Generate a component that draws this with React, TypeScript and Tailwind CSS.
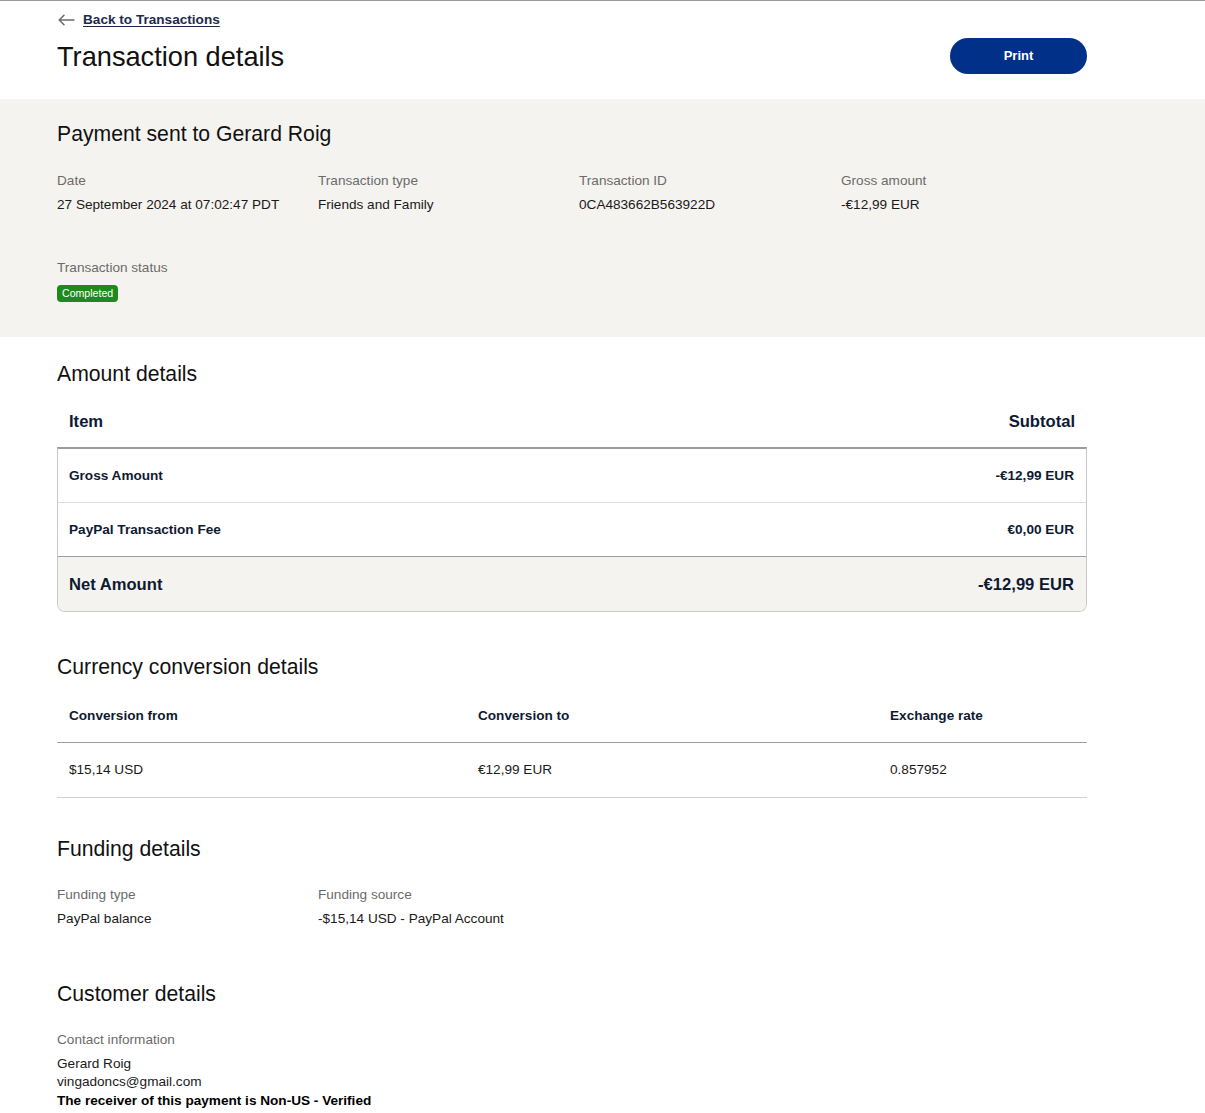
import React from "react";

const font = { fontFamily: '"Liberation Sans", Arial, sans-serif' };

function Field({ label, value }: { label: string; value: string }) {
  return (
    <div>
      <div className="text-[13.6px] leading-[20px] text-[#6b6b6b]">{label}</div>
      <div className="mt-[4px] text-[13.6px] leading-[20px] text-[#1a1a1a]">{value}</div>
    </div>
  );
}

export default function App() {
  return (
    <div style={font} className="min-h-[1113px] bg-white border-t border-[#9a9a9a] text-[#1a1a1a]">
      {/* Header */}
      <div className="px-[57px] h-[98px] flex justify-between w-[1144px]">
        <div>
          <a href="#" className="mt-[10px] h-[18px] flex items-center gap-[8px] text-[13.6px] font-bold text-[#1c2b4d] underline underline-offset-2">
            <svg width="17" height="12" viewBox="0 0 17 12" fill="none" stroke="#6b6b6b" strokeWidth="1.5" strokeLinecap="round" strokeLinejoin="round" className="ml-[1px]">
              <path d="M16 6H1.5" />
              <path d="M6 1.2L1.2 6L6 10.8" />
            </svg>
            <span>Back to Transactions</span>
          </a>
          <h1 className="mt-[12px] text-[27.2px] leading-[32px] text-[#111]">Transaction details</h1>
        </div>
        <button className="mt-[37px] h-[36px] w-[137px] rounded-full bg-[#003087] text-white text-[13px] font-bold">
          Print
        </button>
      </div>

      {/* Summary band */}
      <div className="bg-[#f5f3ef] px-[57px] pt-[21px] pb-[33px]">
        <h2 className="text-[21.2px] leading-[28px] text-[#111]">Payment sent to Gerard Roig</h2>
        <div className="mt-[23px] grid grid-cols-[261px_261px_262px_261px]">
          <Field label="Date" value="27 September 2024 at 07:02:47 PDT" />
          <Field label="Transaction type" value="Friends and Family" />
          <Field label="Transaction ID" value="0CA483662B563922D" />
          <Field label="Gross amount" value="-€12,99 EUR" />
        </div>
        <div className="mt-[43px]">
          <div className="text-[13.6px] leading-[20px] text-[#6b6b6b]">Transaction status</div>
          <div className="mt-[7px] inline-flex h-[17px] items-center rounded-[4px] bg-[#1d8a1d] px-[5px] text-[10.6px] text-white">
            Completed
          </div>
        </div>
      </div>

      {/* Amount details */}
      <div className="px-[57px] w-[1144px]">
        <h2 className="mt-[23px] text-[21.2px] leading-[28px] text-[#111]">Amount details</h2>
        <div className="mt-[9px] flex h-[50px] items-center justify-between px-[12px] pt-[1px] text-[16.6px] font-bold text-[#0e1a33]">
          <span>Item</span>
          <span>Subtotal</span>
        </div>
        <div className="border-t-2 border-t-[#9c9c9c] border-x border-b border-[#c9c9c9] rounded-b-[8px] overflow-hidden text-[#0e1a33]">
          <div className="flex h-[54px] items-center justify-between pl-[11px] pr-[12px] pt-[3px] text-[13.6px] font-bold border-b border-[#dcdcdc]">
            <span>Gross Amount</span>
            <span>-€12,99 EUR</span>
          </div>
          <div className="flex h-[54px] items-center justify-between pl-[11px] pr-[12px] pt-[3px] text-[13.6px] font-bold border-b border-[#9c9c9c]">
            <span>PayPal Transaction Fee</span>
            <span>€0,00 EUR</span>
          </div>
          <div className="flex h-[54px] items-center justify-between pl-[11px] pr-[12px] pt-[3px] text-[16.6px] font-bold bg-[#f5f3ef]">
            <span>Net Amount</span>
            <span>-€12,99 EUR</span>
          </div>
        </div>

        {/* Currency conversion */}
        <h2 className="mt-[41px] text-[21.2px] leading-[28px] text-[#111]">Currency conversion details</h2>
        <div className="mt-[8px] grid grid-cols-[409px_412px_1fr] h-[54px] items-center px-[12px] pt-[2px] text-[13.6px] font-bold text-[#0e1a33] border-b border-[#9c9c9c]">
          <span>Conversion from</span>
          <span>Conversion to</span>
          <span>Exchange rate</span>
        </div>
        <div className="grid grid-cols-[409px_412px_1fr] h-[55px] items-center px-[12px] pt-[1px] text-[13.6px] text-[#1a1a1a] border-b border-[#d0d0d0]">
          <span>$15,14 USD</span>
          <span>€12,99 EUR</span>
          <span>0.857952</span>
        </div>

        {/* Funding */}
        <h2 className="mt-[37px] text-[21.2px] leading-[28px] text-[#111]">Funding details</h2>
        <div className="mt-[22px] grid grid-cols-[261px_1fr]">
          <Field label="Funding type" value="PayPal balance" />
          <Field label="Funding source" value="-$15,14 USD - PayPal Account" />
        </div>

        {/* Customer */}
        <h2 className="mt-[51px] text-[21.2px] leading-[28px] text-[#111]">Customer details</h2>
        <div className="mt-[22px] text-[13.6px] leading-[20px] text-[#6b6b6b]">Contact information</div>
        <div className="mt-[5px] text-[13.6px] leading-[18px] text-[#1a1a1a]">Gerard Roig</div>
        <div className="text-[13.6px] leading-[18px] text-[#1a1a1a]">vingadoncs@gmail.com</div>
        <div className="mt-[1px] text-[13.6px] leading-[18px] font-bold text-black">
          The receiver of this payment is Non-US - Verified
        </div>
      </div>
    </div>
  );
}
